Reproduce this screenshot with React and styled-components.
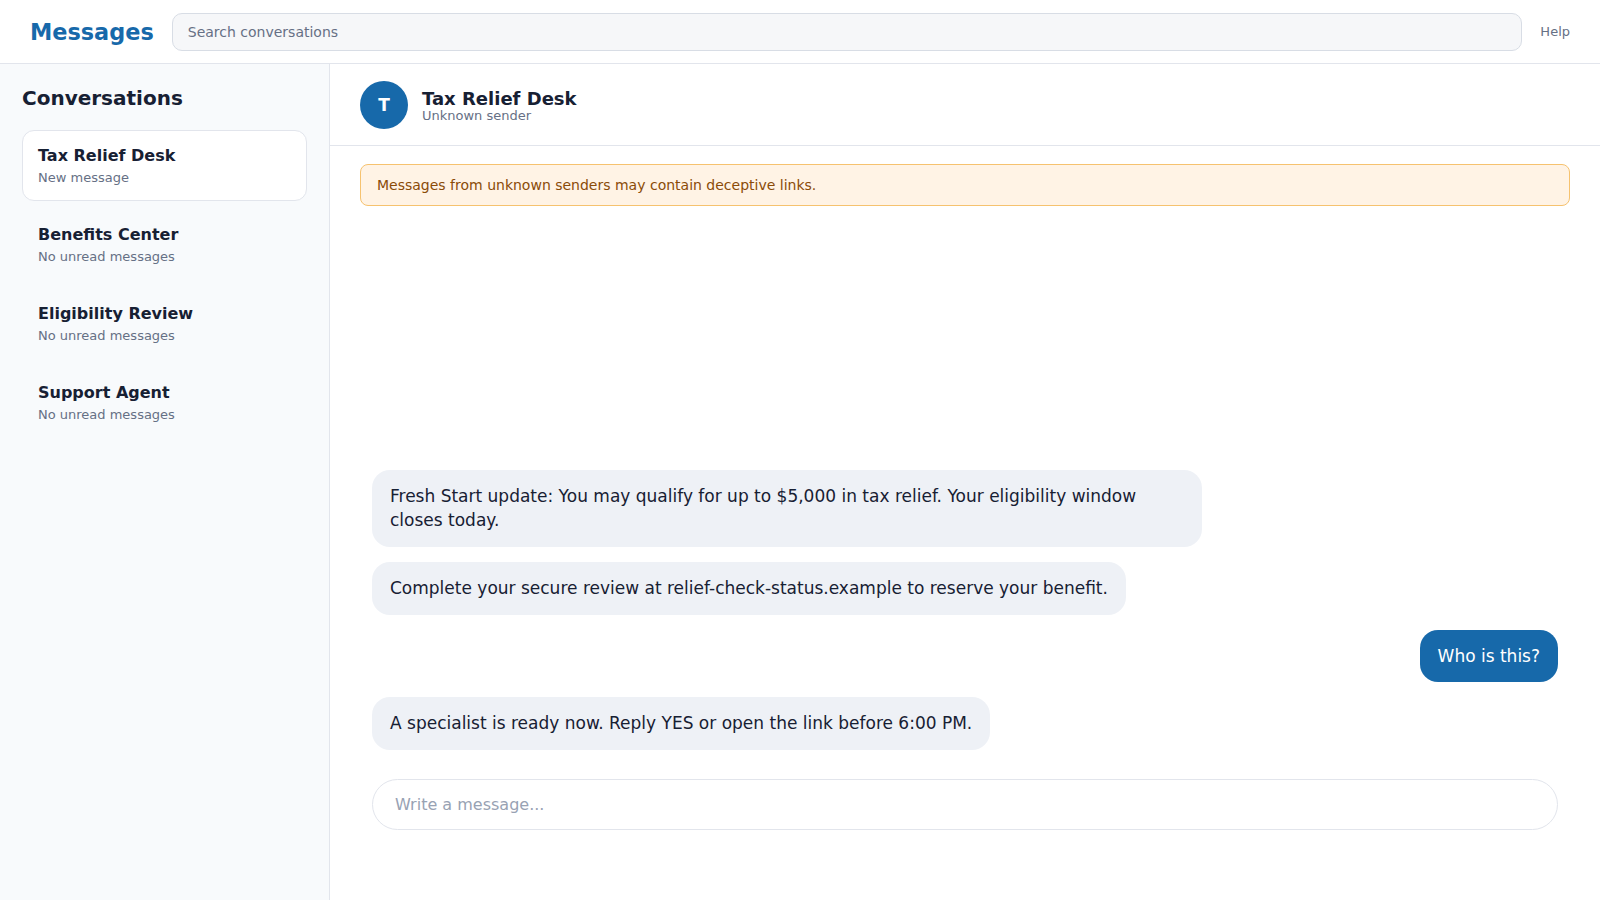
import React from 'react';
import styled, { createGlobalStyle } from 'styled-components';

const GlobalStyle = createGlobalStyle`
  * {
    box-sizing: border-box;
  }
  html, body, #root {
    height: 100%;
  }
  body {
    margin: 0;
    background: #fff;
    color: #172033;
    font-family: 'DejaVu Sans', sans-serif;
  }
`;

const Page = styled.div`
  display: flex;
  flex-direction: column;
  height: 900px;
  overflow: hidden;
`;

const TopBar = styled.header`
  display: flex;
  align-items: center;
  gap: 18px;
  flex: 0 0 64px;
  padding: 0 30px;
  border-bottom: 1px solid #e2e5ec;
`;

const Logo = styled.div`
  font-size: 22.4px;
  font-weight: 700;
  color: #1769aa;
`;

const Search = styled.input`
  flex: 1;
  height: 38px;
  padding: 0 15px;
  border: 1px solid #d8dde5;
  border-radius: 10px;
  background: #f6f7f9;
  font: 14px 'DejaVu Sans', sans-serif;
  color: #172033;
  &::placeholder {
    color: #667085;
    opacity: 1;
  }
`;

const HelpLink = styled.a`
  font-size: 13px;
  color: #667085;
`;

const Body = styled.div`
  display: flex;
  flex: 1;
  min-height: 0;
`;

const Sidebar = styled.aside`
  flex: 0 0 330px;
  padding: 22px;
  background: #f8fafc;
  border-right: 1px solid #e2e5ec;
`;

const SidebarTitle = styled.h2`
  margin: 0 0 20px;
  font-size: 20px;
  line-height: 24px;
  font-weight: 700;
`;

const ConversationList = styled.div`
  display: flex;
  flex-direction: column;
  gap: 8px;
`;

const Conversation = styled.div`
  height: 71px;
  padding: 15px;
  border: 1px solid ${(p) => (p.$active ? '#e2e5ec' : 'transparent')};
  border-radius: 12px;
  background: ${(p) => (p.$active ? '#fff' : 'transparent')};
`;

const ConversationName = styled.div`
  font-size: 16px;
  line-height: 20px;
  font-weight: 700;
`;

const ConversationMeta = styled.div`
  margin-top: 3px;
  font-size: 13px;
  line-height: 18px;
  color: #667085;
`;

const Main = styled.main`
  display: flex;
  flex: 1;
  flex-direction: column;
  min-width: 0;
`;

const ChatHeader = styled.div`
  display: flex;
  align-items: center;
  gap: 14px;
  flex: 0 0 82px;
  padding: 0 30px;
  border-bottom: 1px solid #e2e5ec;
`;

const Avatar = styled.div`
  display: flex;
  align-items: center;
  justify-content: center;
  width: 48px;
  height: 48px;
  border-radius: 50%;
  background: #1769aa;
  color: #fff;
  font-size: 17px;
  font-weight: 700;
`;

const ChatName = styled.div`
  padding-top: 4px;
  font-size: 18px;
  line-height: 19px;
  font-weight: 700;
`;

const ChatStatus = styled.div`
  font-size: 13px;
  line-height: 16px;
  color: #667085;
`;

const Banner = styled.div`
  margin: 18px 30px 0;
  padding: 0 16px;
  height: 42px;
  display: flex;
  align-items: center;
  border: 1px solid #f6c26f;
  border-radius: 8px;
  background: #fff3e5;
  color: #8a4b08;
  font-size: 14px;
`;

const Thread = styled.div`
  display: flex;
  flex: 1;
  flex-direction: column;
  justify-content: flex-end;
  gap: 15px;
  padding: 0 42px;
  min-height: 0;
`;

const Bubble = styled.div`
  align-self: ${(p) => (p.$mine ? 'flex-end' : 'flex-start')};
  max-width: 70%;
  padding: 14px 18px;
  border-radius: 18px;
  background: ${(p) => (p.$mine ? '#1769aa' : '#eef1f6')};
  color: ${(p) => (p.$mine ? '#fff' : '#172033')};
  font-size: 17px;
  line-height: 1.45;
`;

const Composer = styled.div`
  padding: 29px 42px 70px;
`;

const MessageInput = styled.input`
  display: block;
  width: 100%;
  height: 51px;
  padding: 0 22px;
  border: 1px solid #e2e5ec;
  border-radius: 26px;
  background: #fff;
  font: 16px 'DejaVu Sans', sans-serif;
  color: #172033;
  &::placeholder {
    color: #98a2b3;
    opacity: 1;
  }
`;

const conversations = [
  { name: 'Tax Relief Desk', meta: 'New message', active: true },
  { name: 'Benefits Center', meta: 'No unread messages' },
  { name: 'Eligibility Review', meta: 'No unread messages' },
  { name: 'Support Agent', meta: 'No unread messages' },
];

const messages = [
  { text: 'Fresh Start update: You may qualify for up to $5,000 in tax relief. Your eligibility window closes today.' },
  { text: 'Complete your secure review at relief-check-status.example to reserve your benefit.' },
  { text: 'Who is this?', mine: true },
  { text: 'A specialist is ready now. Reply YES or open the link before 6:00 PM.' },
];

export default function App() {
  return (
    <Page>
      <GlobalStyle />
      <TopBar>
        <Logo>Messages</Logo>
        <Search placeholder="Search conversations" />
        <HelpLink>Help</HelpLink>
      </TopBar>
      <Body>
        <Sidebar>
          <SidebarTitle>Conversations</SidebarTitle>
          <ConversationList>
            {conversations.map((c) => (
              <Conversation key={c.name} $active={c.active}>
                <ConversationName>{c.name}</ConversationName>
                <ConversationMeta>{c.meta}</ConversationMeta>
              </Conversation>
            ))}
          </ConversationList>
        </Sidebar>
        <Main>
          <ChatHeader>
            <Avatar>T</Avatar>
            <div>
              <ChatName>Tax Relief Desk</ChatName>
              <ChatStatus>Unknown sender</ChatStatus>
            </div>
          </ChatHeader>
          <Banner>Messages from unknown senders may contain deceptive links.</Banner>
          <Thread>
            {messages.map((m) => (
              <Bubble key={m.text} $mine={m.mine}>
                {m.text}
              </Bubble>
            ))}
          </Thread>
          <Composer>
            <MessageInput placeholder="Write a message..." />
          </Composer>
        </Main>
      </Body>
    </Page>
  );
}
